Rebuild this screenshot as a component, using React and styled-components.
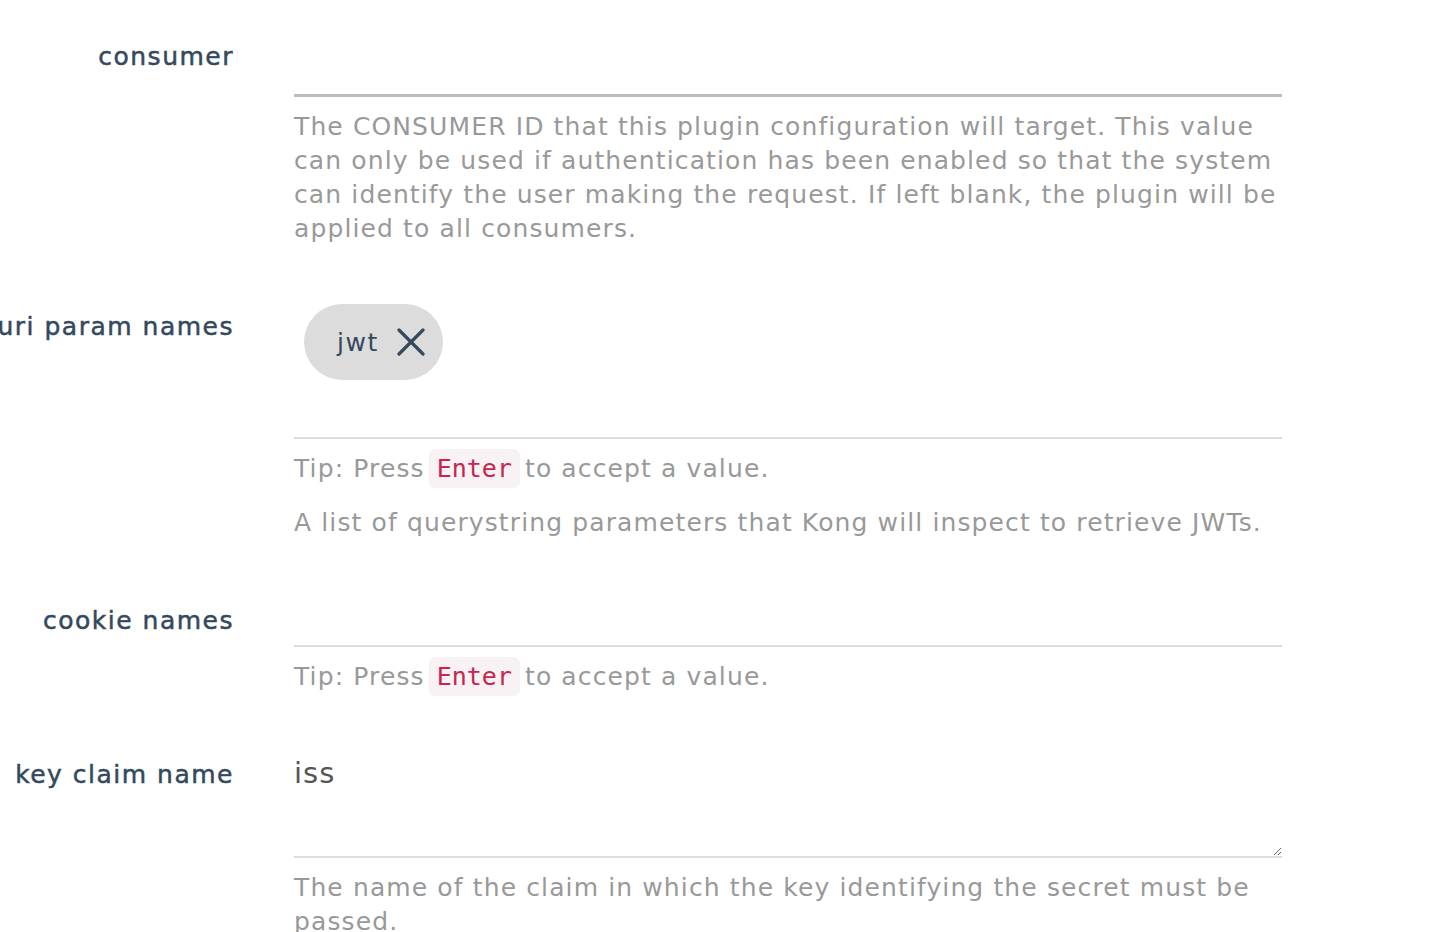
import React from 'react';
import styled, { createGlobalStyle } from 'styled-components';

const GlobalStyle = createGlobalStyle`
  html, body {
    margin: 0;
    padding: 0;
    background: #ffffff;
  }
  body {
    font-family: "DejaVu Sans", "Open Sans", sans-serif;
    overflow: hidden;
  }
`;

const Form = styled.form`
  display: flex;
  flex-direction: column;
  gap: 50px;
  padding-top: 26px;
  width: 1282px;
`;

const Field = styled.div`
  display: grid;
  grid-template-columns: 234px 988px;
  column-gap: 60px;
  align-items: start;
`;

const Label = styled.label`
  padding-top: 14px;
  font-size: 25px;
  line-height: 34px;
  font-weight: 500;
  color: #34495e;
  text-align: right;
  white-space: nowrap;
  direction: rtl;
  letter-spacing: 1.5px;
  -webkit-text-stroke: 0.5px #34495e;
`;

const Control = styled.div`
  display: flex;
  flex-direction: column;
`;

const TextInput = styled.input`
  box-sizing: border-box;
  width: 100%;
  height: ${({ $height }) => $height}px;
  border: none;
  border-bottom: ${({ $strong }) => ($strong ? '3px solid #bdbdbd' : '2px solid #dddddd')};
  outline: none;
  padding: 0;
  font: inherit;
  font-size: 30px;
  color: #555;
  background: transparent;
`;

const TextArea = styled.textarea`
  box-sizing: border-box;
  width: 100%;
  height: 114px;
  border: none;
  border-bottom: 2px solid #dddddd;
  outline: none;
  padding: 12px 0 0;
  font-family: inherit;
  font-size: 29px;
  line-height: 34px;
  letter-spacing: 1px;
  color: #555;
  background: transparent;
  resize: vertical;
`;

const TagField = styled.div`
  box-sizing: border-box;
  display: flex;
  flex-wrap: wrap;
  align-items: flex-start;
  height: 143px;
  padding: 8px 10px;
  border-bottom: 2px solid #dddddd;
`;

const Chip = styled.span`
  display: inline-flex;
  align-items: center;
  gap: 18px;
  height: 76px;
  padding: 0 18px 0 33px;
  border-radius: 38px;
  background: #dcdcdc;
  color: #34495e;
  font-size: 25px;
  letter-spacing: 1.5px;

  svg {
    display: block;
  }
`;

const Help = styled.p`
  margin: ${({ $gap }) => $gap || 13}px 0 0;
  font-size: 25px;
  line-height: 34px;
  color: #999999;
  letter-spacing: 1.12px;
`;

const Code = styled.code`
  margin: 0 5px 0 4px;
  padding: 5px 8px;
  border-radius: 6px;
  background: #f9f2f4;
  color: #c7254e;
  font-family: "DejaVu Sans Mono", "Liberation Mono", monospace;
  font-size: 25px;
  letter-spacing: 0;
`;

const CloseIcon = () => (
  <svg width="28" height="28" viewBox="0 0 28 28" fill="none">
    <path d="M2 2L26 26M26 2L2 26" stroke="#34495e" strokeWidth="3.2" strokeLinecap="round" />
  </svg>
);

const Tip = () => (
  <Help>
    Tip: Press<Code>Enter</Code>to accept a value.
  </Help>
);

export default function App() {
  return (
    <>
      <GlobalStyle />
      <Form>
        <Field>
          <Label>consumer</Label>
          <Control>
            <TextInput $height={71} $strong />
            <Help>
              The CONSUMER ID that this plugin configuration will target. This value can only be used
              if authentication has been enabled so that the system can identify the user making the
              request. If left blank, the plugin will be applied to all consumers.
            </Help>
          </Control>
        </Field>

        <Field>
          <Label>uri param names</Label>
          <Control>
            <TagField>
              <Chip>
                jwt
                <CloseIcon />
              </Chip>
            </TagField>
            <Tip />
            <Help $gap={20}>A list of querystring parameters that Kong will inspect to retrieve JWTs.</Help>
          </Control>
        </Field>

        <Field>
          <Label>cookie names</Label>
          <Control>
            <TextInput $height={57} />
            <Tip />
          </Control>
        </Field>

        <Field>
          <Label>key claim name</Label>
          <Control>
            <TextArea defaultValue="iss" />
            <Help>The name of the claim in which the key identifying the secret must be passed.</Help>
          </Control>
        </Field>
      </Form>
    </>
  );
}
